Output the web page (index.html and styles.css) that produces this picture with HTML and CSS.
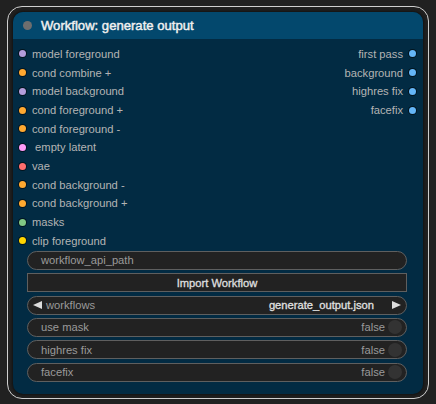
FILE: index.html
```html
<!DOCTYPE html>
<html>
<head>
<meta charset="utf-8">
<link rel="stylesheet" href="styles.css">
</head>
<body>
<div class="outline">
  <div class="node">
    <div class="title"><span class="title-dot"></span><span class="title-text">Workflow: generate output</span></div>
    <div class="slots">
      <div class="inputs">
        <div class="slot"><span class="dot model"></span>model foreground</div>
        <div class="slot"><span class="dot cond"></span>cond combine +</div>
        <div class="slot"><span class="dot model"></span>model background</div>
        <div class="slot"><span class="dot cond"></span>cond foreground +</div>
        <div class="slot"><span class="dot cond"></span>cond foreground -</div>
        <div class="slot"><span class="dot latent"></span>&nbsp;empty latent</div>
        <div class="slot"><span class="dot vae"></span>vae</div>
        <div class="slot"><span class="dot cond"></span>cond background -</div>
        <div class="slot"><span class="dot cond"></span>cond background +</div>
        <div class="slot"><span class="dot mask"></span>masks</div>
        <div class="slot"><span class="dot clip"></span>clip foreground</div>
      </div>
      <div class="outputs">
        <div class="slot out">first pass<span class="dot image"></span></div>
        <div class="slot out">background<span class="dot image"></span></div>
        <div class="slot out">highres fix<span class="dot image"></span></div>
        <div class="slot out">facefix<span class="dot image"></span></div>
      </div>
    </div>
    <div class="widgets">
      <div class="widget pill"><span class="label">workflow_api_path</span></div>
      <div class="widget button">Import Workflow</div>
      <div class="widget pill combo">
        <span class="arrow left"></span>
        <span class="label">workflows</span>
        <span class="value strong">generate_output.json</span>
        <span class="arrow right"></span>
      </div>
      <div class="widget pill"><span class="label">use mask</span><span class="value">false</span><span class="toggle"></span></div>
      <div class="widget pill"><span class="label">highres fix</span><span class="value">false</span><span class="toggle"></span></div>
      <div class="widget pill"><span class="label">facefix</span><span class="value">false</span><span class="toggle"></span></div>
    </div>
  </div>
</div>
</body>
</html>
```
FILE: styles.css
```css
* { box-sizing: border-box; }
html, body { margin: 0; }
body {
  width: 436px;
  height: 404px;
  background: #212121;
  padding: 6px 0 0 7px;
  font-family: "Liberation Sans", Arial, sans-serif;
  overflow: hidden;
}
.outline {
  width: 422px;
  height: 393px;
  border: 1px solid #cfcfcf;
  border-radius: 15px;
  padding: 5px 5px 5px 5px;
}
.node {
  width: 410px;
  height: 382px;
  background: #022b43;
  border-radius: 10px;
  box-shadow: 0 0 3px 1px #111;
  display: flex;
  flex-direction: column;
  overflow: hidden;
}
.title {
  height: 27px;
  background: #03486d;
  display: flex;
  align-items: center;
  flex-shrink: 0;
}
.title-dot {
  width: 9px;
  height: 9px;
  border-radius: 50%;
  background: #6e6e6e;
  margin-left: 10px;
  margin-top: 0px;
}
.title-text {
  margin-left: 9px;
  color: #f0f0f0;
  font-size: 13.1px;
  -webkit-text-stroke: 0.45px #f0f0f0;
  padding-top: 0px;
}
.slots {
  display: flex;
  justify-content: space-between;
  padding-top: 5.6px;
}
.inputs, .outputs {
  display: flex;
  flex-direction: column;
}
.slot {
  height: 18.7px;
  display: flex;
  align-items: center;
  color: #b4b4b4;
  font-size: 11.2px;
}
.inputs .slot .dot { margin-left: 6px; margin-right: 6px; }
.slot.out { justify-content: flex-end; }
.outputs .slot .dot { margin-left: 6px; margin-right: 7px; }
.dot {
  width: 7px;
  height: 7px;
  border-radius: 50%;
  box-shadow: 0 0 0 1px rgba(0,0,0,0.55);
  flex-shrink: 0;
}
.model { background: #b39ddb; }
.cond { background: #ffa931; }
.latent { background: #ff9cf9; }
.vae { background: #ff6e6e; }
.mask { background: #81c784; }
.clip { background: #ffd500; }
.image { background: #64b5f6; }

.widgets {
  display: flex;
  flex-direction: column;
  gap: 3.4px;
  margin: 0.6px 16px 0 14px;
}
.widget {
  height: 19px;
  background: #222222;
  border: 1px solid #5f5f5f;
  display: flex;
  align-items: center;
  font-size: 11.2px;
  color: #999;
}
.pill {
  border-radius: 10px;
  padding: 0 4px 0 13px;
}
.button {
  justify-content: center;
  color: #dcdcdc;
  -webkit-text-stroke: 0.35px #dcdcdc;
}
.label { color: #9a9a9a; }
.value {
  margin-left: auto;
  color: #9a9a9a;
}
.value.strong {
  color: #e0e0e0;
  -webkit-text-stroke: 0.3px #e0e0e0;
  margin-right: 18px;
}
.toggle {
  width: 14px;
  height: 14px;
  border-radius: 50%;
  background: #333;
  margin-left: 3px;
}
.combo { padding-left: 5px; padding-right: 5px; }
.combo .label { margin-left: 4px; }
.arrow {
  width: 0;
  height: 0;
  border-top: 4.5px solid transparent;
  border-bottom: 4.5px solid transparent;
}
.arrow.left { border-right: 9px solid #dcdcdc; }
.arrow.right { border-left: 9px solid #dcdcdc; }
```
